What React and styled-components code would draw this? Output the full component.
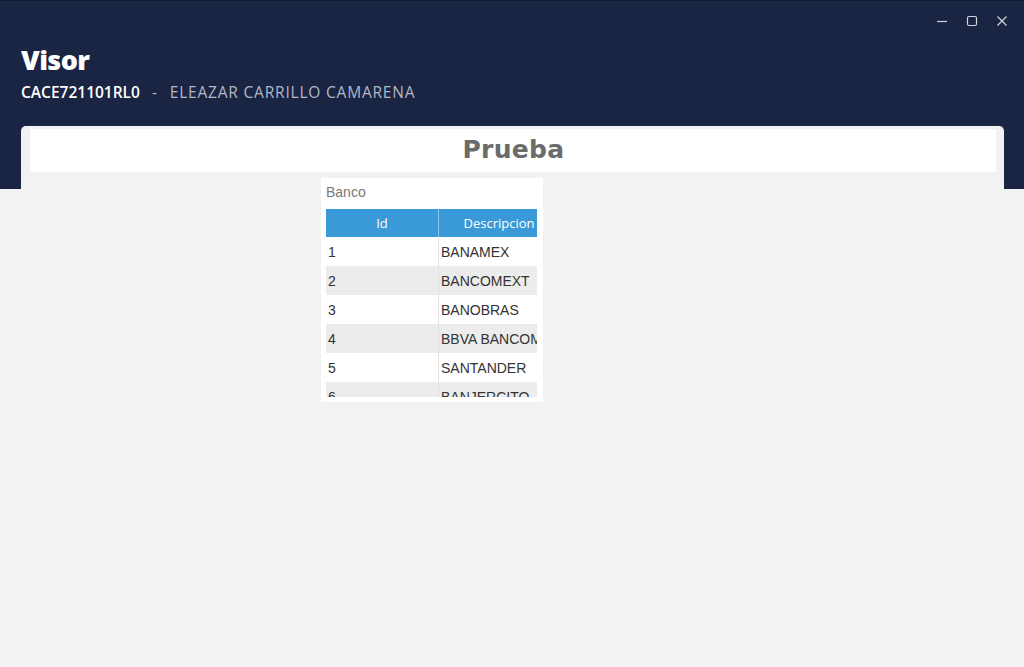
import React from "react";
import styled, { createGlobalStyle } from "styled-components";

const bancos = [
  [1, "BANAMEX"],
  [2, "BANCOMEXT"],
  [3, "BANOBRAS"],
  [4, "BBVA BANCOMER"],
  [5, "SANTANDER"],
  [6, "BANJERCITO"],
  [7, "HSBC"],
];

const Global = createGlobalStyle`
  html, body {
    margin: 0;
    background: #f2f2f2;
    height: 100%;
  }
  #root { min-height: 100%; }
`;

const Page = styled.div`
  min-height: 667px;
  background: #f2f2f2;
  display: flex;
  flex-direction: column;
  font-family: "Open Sans", "Liberation Sans", sans-serif;
`;

const Header = styled.header`
  background: #1a2443;
  border-top: 1px solid #111a33;
  height: 189px;
  padding: 0 20px 0 21px;
  box-sizing: border-box;
  display: flex;
  flex-direction: column;
`;

const TitleBar = styled.div`
  display: flex;
  justify-content: flex-end;
  align-items: center;
  gap: 14px;
  height: 40px;
  margin-right: -6px;
`;

const WinButton = styled.button`
  width: 16px;
  height: 16px;
  padding: 0;
  border: 0;
  background: none;
  display: flex;
  align-items: center;
  justify-content: center;
  color: #d2d5dc;
`;

const Title = styled.h1`
  margin: 0;
  font-size: 27px;
  line-height: 38px;
  font-weight: 800;
  color: #ffffff;
  letter-spacing: -0.6px;
`;

const Subtitle = styled.div`
  display: flex;
  align-items: center;
  gap: 12px;
  font-size: 15.5px;
  font-weight: 600;
  line-height: 24px;
  margin-top: 1px;
`;

const Rfc = styled.span`
  color: #ffffff;
`;

const Name = styled.span`
  color: #b3b8c8;
  font-weight: 500;
  letter-spacing: 0.8px;
`;

const Card = styled.section`
  margin: -63px 20px 0 21px;
  background: #f2f2f2;
  border-radius: 5px 5px 0 0;
  border-top: 1px solid #f8f8f8;
  padding: 2px 8px 0 9px;
  flex: 1;
`;

const Banner = styled.div`
  background: #ffffff;
  height: 43px;
  display: flex;
  align-items: center;
  justify-content: center;
`;

const BannerText = styled.h2`
  margin: -3px 0 0 1px;
  font-family: "DejaVu Sans", "Liberation Sans", sans-serif;
  font-weight: 800;
  font-size: 25px;
  color: #6b6b6b;
  letter-spacing: 0.3px;
`;

const Panel = styled.div`
  margin: 6px 0 0 291px;
  width: 212px;
  height: 214px;
  background: #ffffff;
  padding: 5px;
  font-family: "Liberation Sans", Arial, sans-serif;
  display: flex;
  flex-direction: column;
`;

const Label = styled.div`
  font-size: 14px;
  color: #7a7a7a;
  line-height: 16px;
  margin: 1px 0 0;
`;

const Scroller = styled.div`
  margin-top: 9px;
  width: 211px;
  height: 188px;
  overflow: hidden;
`;

const Table = styled.table`
  border-collapse: collapse;
  width: 232px;
  table-layout: fixed;
`;

const Th = styled.th`
  width: ${(p) => p.w}px;
  height: 28px;
  padding: 0;
  background: #3a9ad9;
  color: #ffffff;
  font-family: "Open Sans", "Liberation Sans", sans-serif;
  font-weight: 400;
  font-size: 13px;
  text-align: center;
  border-left: ${(p) => (p.divider ? "1px solid #8cc4ea" : "0")};
`;

const Tr = styled.tr`
  background: ${(p) => (p.odd ? "#ffffff" : "#ececec")};
`;

const Td = styled.td`
  height: 29px;
  padding: 0 0 0 2px;
  font-size: 14px;
  color: #333;
  white-space: nowrap;
  overflow: hidden;
  border-left: ${(p) => (p.divider ? "1px solid #e2e2e2" : "0")};
`;

const Minimize = () => (
  <svg width="12" height="12" viewBox="0 0 12 12">
    <line x1="1" y1="6.5" x2="11" y2="6.5" stroke="currentColor" strokeWidth="1.2" />
  </svg>
);

const Maximize = () => (
  <svg width="12" height="12" viewBox="0 0 12 12">
    <rect x="1.5" y="1.5" width="9" height="9" rx="1.5" fill="none" stroke="currentColor" strokeWidth="1.2" />
  </svg>
);

const Close = () => (
  <svg width="12" height="12" viewBox="0 0 12 12">
    <path d="M1.5 1.5 L10.5 10.5 M10.5 1.5 L1.5 10.5" stroke="currentColor" strokeWidth="1.2" />
  </svg>
);

export default function App() {
  return (
    <>
      <Global />
      <Page>
        <Header>
          <TitleBar>
            <WinButton aria-label="minimizar"><Minimize /></WinButton>
            <WinButton aria-label="maximizar"><Maximize /></WinButton>
            <WinButton aria-label="cerrar"><Close /></WinButton>
          </TitleBar>
          <Title>Visor</Title>
          <Subtitle>
            <Rfc>CACE721101RL0</Rfc>
            <Name>-</Name>
            <Name>ELEAZAR CARRILLO CAMARENA</Name>
          </Subtitle>
        </Header>
        <Card>
          <Banner>
            <BannerText>Prueba</BannerText>
          </Banner>
          <Panel>
            <Label>Banco</Label>
            <Scroller>
              <Table>
                <thead>
                  <tr>
                    <Th w={112}>Id</Th>
                    <Th w={120} divider>Descripcion</Th>
                  </tr>
                </thead>
                <tbody>
                  {bancos.map(([id, desc], i) => (
                    <Tr key={id} odd={i % 2 === 0}>
                      <Td>{id}</Td>
                      <Td divider>{desc}</Td>
                    </Tr>
                  ))}
                </tbody>
              </Table>
            </Scroller>
          </Panel>
        </Card>
      </Page>
    </>
  );
}
